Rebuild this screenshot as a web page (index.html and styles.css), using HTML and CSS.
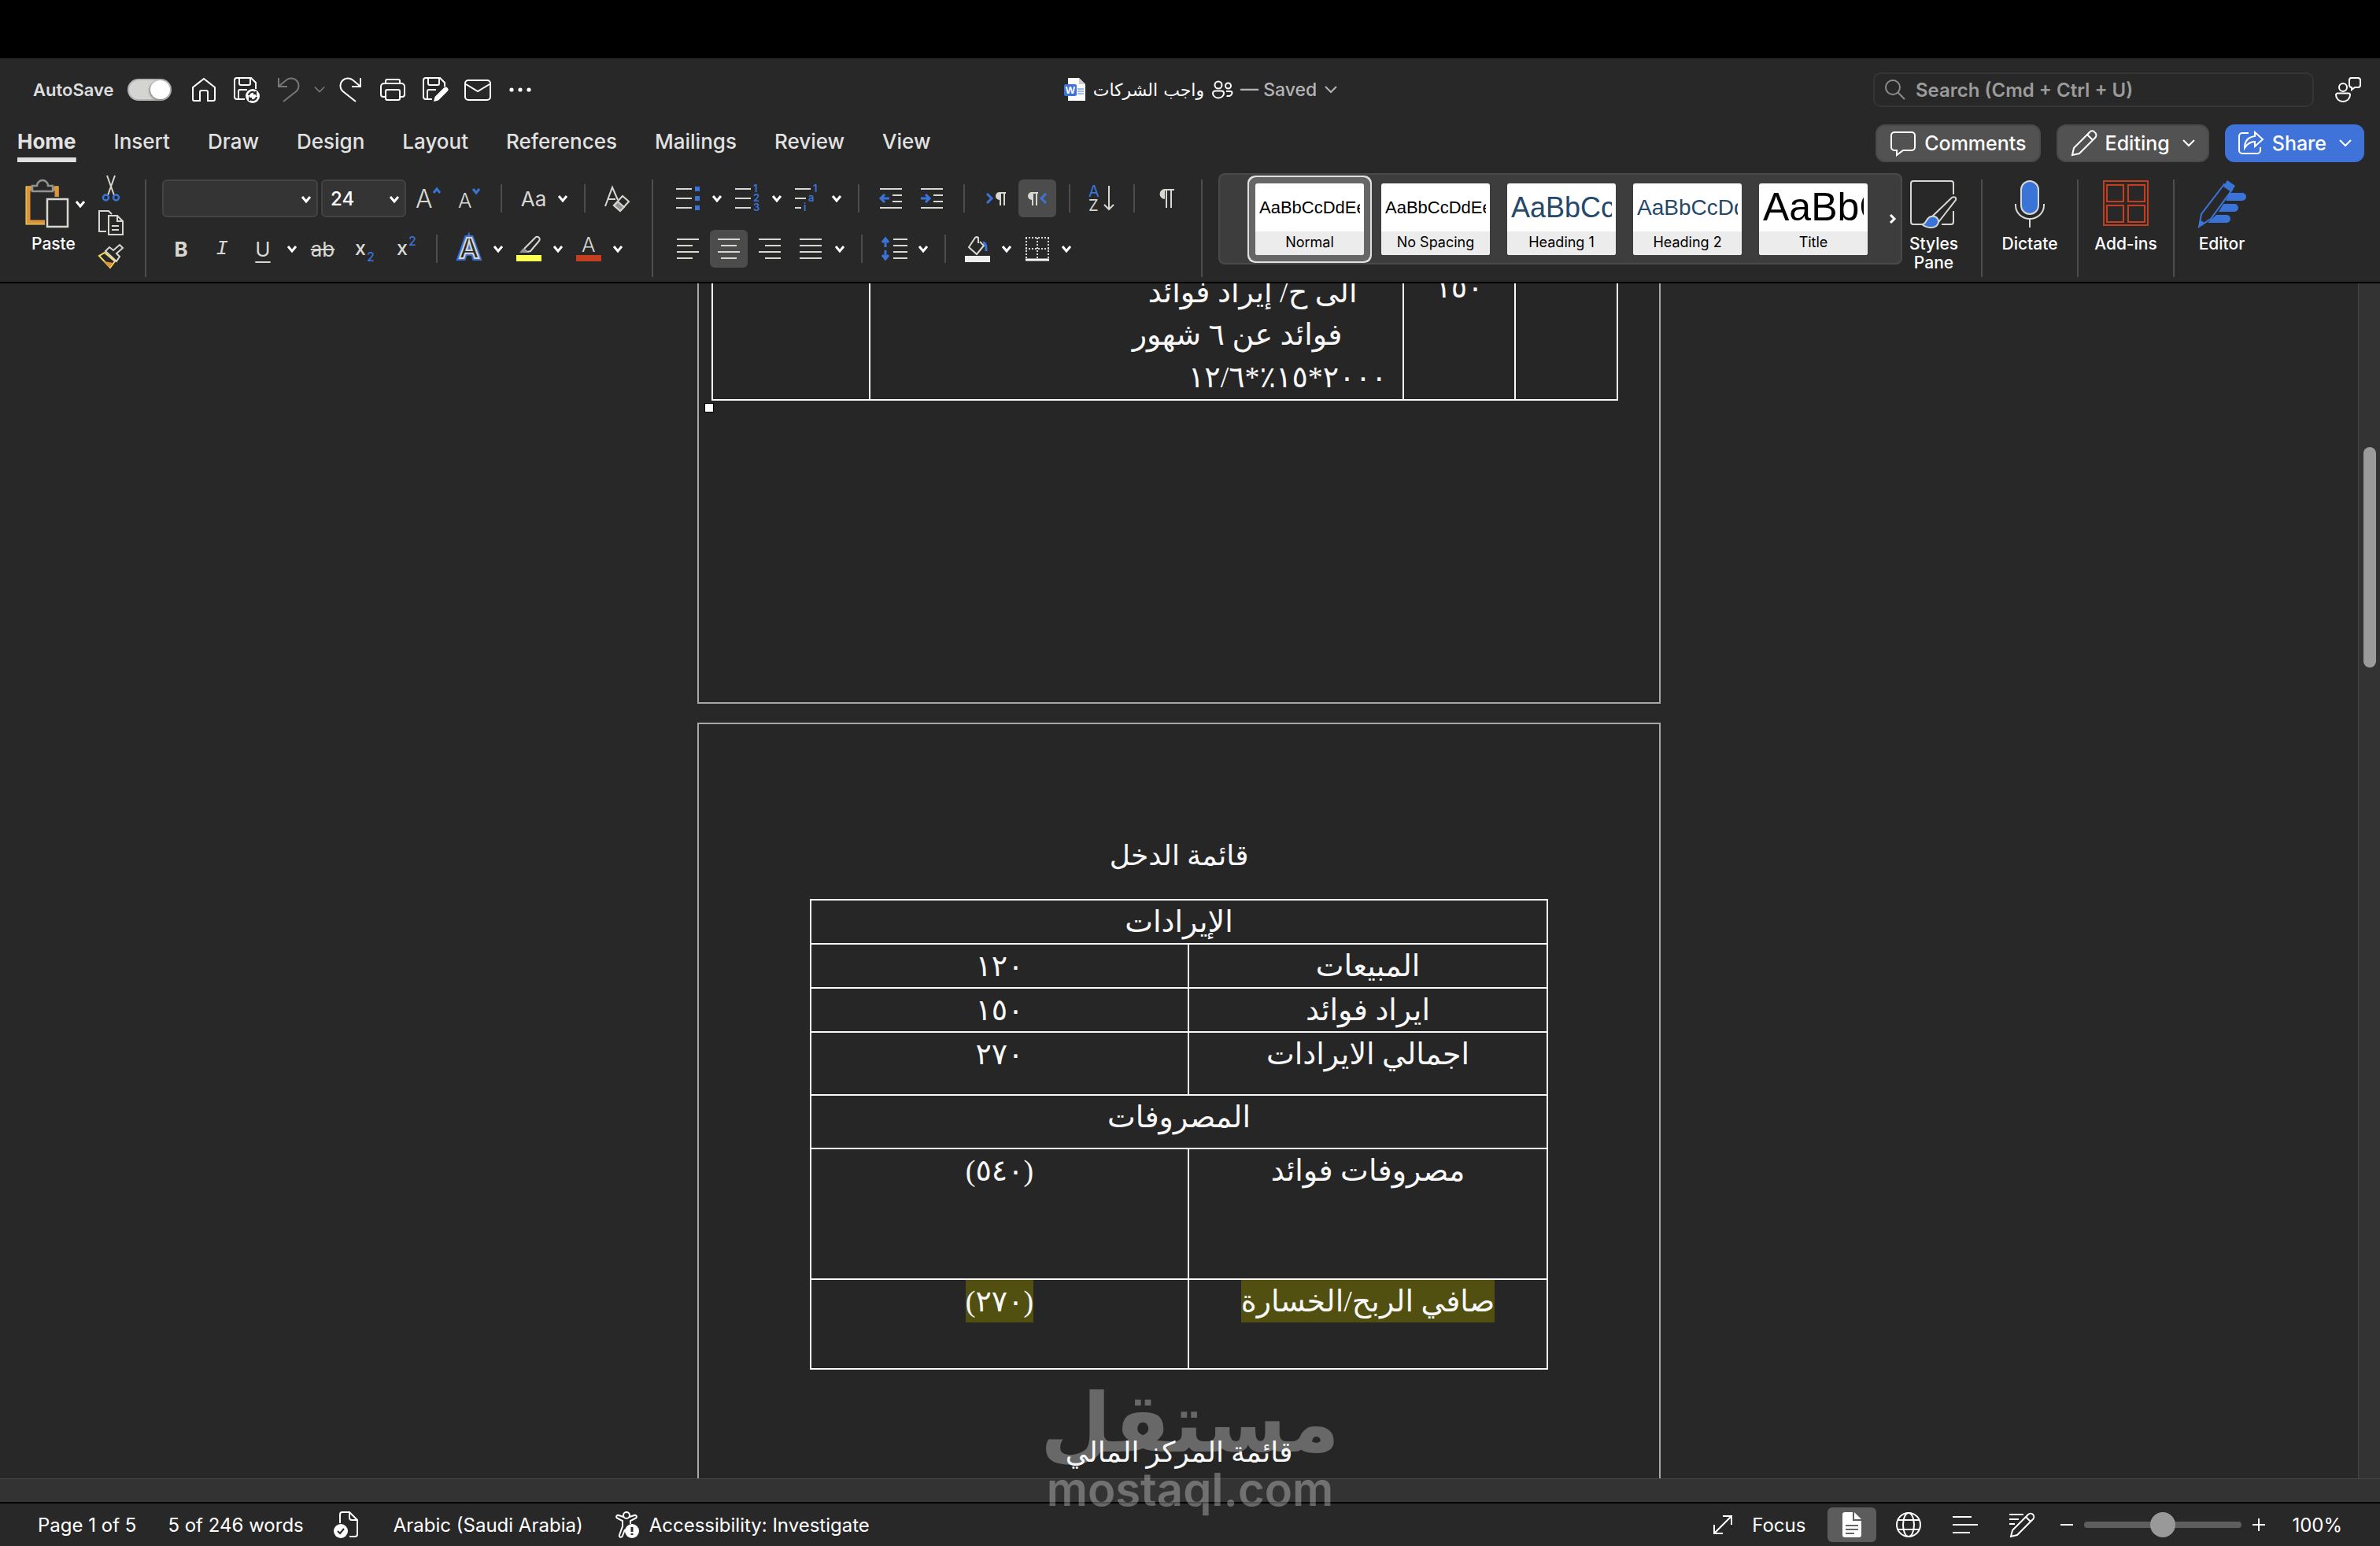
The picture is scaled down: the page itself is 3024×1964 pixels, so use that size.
FILE: index.html
```html
<!DOCTYPE html>
<html lang="en">
<head>
<meta charset="UTF-8" />
<meta name="viewport" content="width=device-width, initial-scale=1" />
<title>واجب الشركات</title>
<link rel="stylesheet" href="styles.css">
</head>
<body>
<!-- shared shapes -->
<svg class="defs" aria-hidden="true">
  <symbol id="chev" viewBox="0 0 14 10"><path d="M2 2l5 6 5-6" fill="none" stroke="currentColor" stroke-width="3"/></symbol>
  <symbol id="chev-thin" viewBox="0 0 16 10"><path d="M1 1l7 7 7-7" fill="none" stroke="currentColor" stroke-width="2"/></symbol>
</svg>

<div class="notch"></div>

<header class="titlebar">
  <div class="quick">
    <label class="autosave" for="autosave">AutoSave</label>
    <input type="checkbox" id="autosave" class="toggle" checked>
    <button class="quick-btn" aria-label="Home"><svg width="32" height="32" viewBox="0 0 32 32"><path d="M2 13L16 2l14 11v15a2 2 0 0 1-2 2h-7V19a2 2 0 0 0-2-2h-6a2 2 0 0 0-2 2v11H4a2 2 0 0 1-2-2z"/></svg></button>
    <button class="quick-btn" aria-label="Save"><svg width="34" height="34" viewBox="0 0 34 34"><path d="M15 29H5a3 3 0 0 1-3-3V5a3 3 0 0 1 3-3h18l6 6v8M8 2v7a2 2 0 0 0 2 2h10a2 2 0 0 0 2-2V2M7 29V19a2 2 0 0 1 2-2h9"/><circle cx="25" cy="25" r="9" fill="#fff" stroke="none"/><path d="M20 24a5 5 0 0 1 9-2v-3m0 3h-3M30 26a5 5 0 0 1-9 2v3m0-3h3" stroke="#282828"/></svg></button>
    <button class="quick-btn dim" aria-label="Undo"><svg width="30" height="32" viewBox="0 0 30 32"><path d="M2 1v11h11M3 11L12 3.500a9.500 9.500 0 0 1 13 1 9.500 9.500 0 0 1 0 13L8 31"/></svg></button>
    <button class="quick-chev dim" aria-label="Undo options"><svg width="14" height="10"><use href="#chev-thin"/></svg></button>
    <button class="quick-btn" aria-label="Redo"><svg width="30" height="32" viewBox="0 0 30 32"><path d="M28 1v11H17M27 11L18 3.500a9.500 9.500 0 0 0-13 1 9.500 9.500 0 0 0 0 13L22 31"/></svg></button>
    <button class="quick-btn" aria-label="Print"><svg width="34" height="30" viewBox="0 0 34 30"><path d="M8 7V4a2 2 0 0 1 2-2h14a2 2 0 0 1 2 2v3M7 24H5a3 3 0 0 1-3-3V11a4 4 0 0 1 4-4h22a4 4 0 0 1 4 4v10a3 3 0 0 1-3 3h-2"/><rect x="8" y="15" width="18" height="13" rx="2"/></svg></button>
    <button class="quick-btn" aria-label="Save as"><svg width="34" height="34" viewBox="0 0 34 34"><path d="M13 29H5a3 3 0 0 1-3-3V5a3 3 0 0 1 3-3h18l6 6v5M8 2v7a2 2 0 0 0 2 2h10a2 2 0 0 0 2-2V2M7 29V19a2 2 0 0 1 2-2h9"/><path d="M15 32l1.500-6L28 14.500a3 3 0 0 1 4.500 4.500L21 30.500z" fill="#fff" stroke="none"/></svg></button>
    <button class="quick-btn" aria-label="Mail"><svg width="34" height="28" viewBox="0 0 34 28"><rect x="1" y="2" width="32" height="25" rx="4"/><path d="M2 7l15 9 15-9"/></svg></button>
    <button class="quick-btn" aria-label="More"><svg width="28" height="6" viewBox="0 0 28 6"><g fill="#fff" stroke="none"><circle cx="3" cy="3" r="2.600"/><circle cx="14" cy="3" r="2.600"/><circle cx="25" cy="3" r="2.600"/></g></svg></button>
  </div>

  <button class="doc-title">
    <svg width="28" height="32" viewBox="0 0 28 32"><path d="M5 1h14l8 8v21H5z" fill="#fff"/><path d="M19 1v8h8z" fill="#ccc"/><path d="M17 15h8M17 18h8M17 21h8" stroke="#3b74d9"/><rect x="0" y="9" width="16" height="15" rx="2" fill="#3b74d9"/><text x="8" y="21" class="w-badge">W</text></svg>
    <bdi class="doc-name" lang="ar">واجب الشركات</bdi>
    <svg class="line" width="28" height="24" viewBox="0 0 28 24"><circle cx="9" cy="6" r="4.500"/><circle cx="21.500" cy="7" r="3.500"/><path d="M5 13.500h8a3 3 0 0 1 3 3c0 3-3 6-7 6s-7-3-7-6a3 3 0 0 1 3-3zM19 14h5a2 2 0 0 1 2.500 2c0 3-3 4.500-7 4"/></svg>
    <span class="saved">— Saved</span>
    <svg class="saved" width="18" height="10"><use href="#chev-thin"/></svg>
  </button>

  <div class="title-right">
    <label class="search" for="search">
      <svg width="28" height="28" viewBox="0 0 28 28"><circle cx="11" cy="11" r="9"/><path d="M17.500 17.500L26 26"/></svg>
      <input type="text" id="search" placeholder="Search (Cmd + Ctrl + U)" aria-label="Search">
    </label>
    <button class="quick-btn" aria-label="Presence"><svg width="34" height="34" viewBox="0 0 34 34"><circle cx="11" cy="14" r="5"/><path d="M4 21.500h14a2 2 0 0 1 2 2c0 5-4 8.500-9 8.500s-9-3.500-9-8.500a2 2 0 0 1 2-2zM21 2h9a3 3 0 0 1 3 3v6a3 3 0 0 1-3 3h-4l-4 3v-3a3 3 0 0 1-3-3V5a3 3 0 0 1 2-3z"/></svg></button>
  </div>
</header>

<nav class="tabs">
  <button class="tab active">Home</button>
  <button class="tab">Insert</button>
  <button class="tab">Draw</button>
  <button class="tab">Design</button>
  <button class="tab">Layout</button>
  <button class="tab">References</button>
  <button class="tab">Mailings</button>
  <button class="tab">Review</button>
  <button class="tab">View</button>
  <div class="tab-actions">
    <button class="pill"><svg width="34" height="32" viewBox="0 0 34 32"><path d="M6 2h22a4 4 0 0 1 4 4v15a4 4 0 0 1-4 4H17l-8 6v-6H6a4 4 0 0 1-4-4V6a4 4 0 0 1 4-4z"/></svg>Comments</button>
    <button class="pill"><svg width="34" height="34" viewBox="0 0 34 34"><path d="M2 32l2-9L24 3a4 4 0 0 1 6.500 0A4.500 4.500 0 0 1 31 10L11 30zM21 6l7 7"/></svg>Editing<svg width="16" height="10"><use href="#chev-thin"/></svg></button>
    <button class="pill share"><svg width="34" height="32" viewBox="0 0 34 32"><path d="M14 3H6a4 4 0 0 0-4 4v18a4 4 0 0 0 4 4h19a4 4 0 0 0 4-4v-4M22 2l10 9-10 9v-6c-6 0-10 3-13 8 0-9 5-14 13-15z"/></svg>Share<svg width="16" height="10"><use href="#chev-thin"/></svg></button>
  </div>
</nav>

<section class="ribbon">
  <div class="clipboard">
    <button class="big paste">
      <span class="paste-icon">
        <svg width="56" height="62" viewBox="0 0 56 62"><path d="M9 10H2v46h23M37 10h4v12" fill="none" stroke="#f5dc62" stroke-width="3"/><path d="M9 12H4v42h21M36 12h4v10" fill="none" stroke="#dd953b" stroke-width="5"/><path d="M9 15V8h6a7 7 0 0 1 14 0h6v7z" fill="#282828" stroke="#939393" stroke-width="2.500"/><rect x="28" y="25" width="26" height="35" fill="#282828" stroke="#d8d8d2" stroke-width="2.500"/></svg>
        <svg width="14" height="10"><use href="#chev"/></svg>
      </span>
      Paste
    </button>
    <div class="clip-tools">
      <button aria-label="Cut"><svg width="24" height="34" viewBox="0 0 24 34"><path d="M7 1l9 25M17 1L8 26" stroke="#d8d8d2" stroke-width="2"/><circle cx="5.500" cy="29" r="3.500" stroke="#3b74d9" stroke-width="2.500"/><circle cx="18.500" cy="29" r="3.500" stroke="#3b74d9" stroke-width="2.500"/></svg></button>
      <button aria-label="Copy"><svg width="34" height="34" viewBox="0 0 34 34"><path d="M11 28H2V2h12l4 4M14 8h11l7 7v17H14zM25 8v7h7M18 21h9M18 26h9" stroke="#d8d8d2" stroke-width="2"/></svg></button>
      <button aria-label="Format painter"><svg width="34" height="32" viewBox="0 0 34 32"><path d="M2 15l14 15 6-8L9 11z" fill="#282828" stroke="#f5dc62" stroke-width="2"/><path d="M8 22l12 2-5 6z" fill="#dd953b"/><path d="M10 9l14 13 4-6-4-4 8-7-4-4-8 7-5-4z" fill="#282828" stroke="#d8d8d2" stroke-width="2"/></svg></button>
    </div>
  </div>

  <span class="divider"></span>

  <div class="rows">
    <div class="row">
      <div class="combo font-name"><select aria-label="Font"><option></option></select><svg width="14" height="10"><use href="#chev"/></svg></div>
      <div class="combo font-size"><select aria-label="Font size"><option>24</option></select><svg width="14" height="10"><use href="#chev"/></svg></div>
      <button class="tool" aria-label="Grow font"><svg width="32" height="30" viewBox="0 0 32 30"><text x="0" y="27" class="t30">A</text><path d="M23 8l4-5 4 5" class="blue"/></svg></button>
      <button class="tool" aria-label="Shrink font"><svg width="28" height="30" viewBox="0 0 28 30"><text x="0" y="27" class="t26">A</text><path d="M19 3l4 5 4-5" class="blue"/></svg></button>
      <span class="sep"></span>
      <button class="tool letters">Aa</button><button class="drop" aria-label="Change case"><svg width="14" height="10"><use href="#chev"/></svg></button>
      <span class="sep"></span>
      <button class="tool" aria-label="Clear formatting"><svg width="34" height="34" viewBox="0 0 34 34"><path d="M2 27L11 3l7 16M6 18h9" /><path d="M13 26l11-12 8 7-11 12z" fill="#282828"/><path d="M13 26l5-5 8 7-5 5z" fill="#939393"/></svg></button>
    </div>
    <div class="row">
      <button class="tool letters bold">B</button>
      <button class="tool letters italic">I</button>
      <button class="tool letters underline">U</button><button class="drop" aria-label="Underline style"><svg width="14" height="10"><use href="#chev"/></svg></button>
      <button class="tool letters strike">ab</button>
      <button class="tool" aria-label="Subscript"><svg width="22" height="34" viewBox="0 0 22 34"><text x="0" y="25" class="t24b">x</text><text x="15" y="33" class="t16 fill-blue">2</text></svg></button>
      <button class="tool" aria-label="Superscript"><svg width="20" height="34" viewBox="0 0 20 34"><text x="0" y="25" class="t24b">x</text><text x="15" y="13" class="t16 fill-blue">2</text></svg></button>
      <span class="sep"></span>
      <button class="tool" aria-label="Text effects"><svg width="34" height="34" viewBox="0 0 34 34"><text x="4" y="29" class="fx-outer">A</text><text x="4" y="29" class="fx-inner" aria-hidden="true">A</text></svg></button><button class="drop" aria-label="Text effects options"><svg width="14" height="10"><use href="#chev"/></svg></button>
      <button class="tool" aria-label="Highlight"><svg width="32" height="34" viewBox="0 0 32 34"><path d="M11 16L24 3a3 3 0 0 1 5 4L18 20l-4 1-4-3z"/><path d="M9 16l6 6H4z" fill="#939393" stroke="none"/><path d="M0 25h32v8H0z" fill="#ffff54" stroke="none"/></svg></button><button class="drop" aria-label="Highlight colour"><svg width="14" height="10"><use href="#chev"/></svg></button>
      <button class="tool" aria-label="Font colour"><svg width="32" height="34" viewBox="0 0 32 34"><text x="7" y="21" class="t26">A</text><path d="M0 25h32v8H0z" fill="#c43e20" stroke="none"/></svg></button><button class="drop" aria-label="Font colour options"><svg width="14" height="10"><use href="#chev"/></svg></button>
    </div>
  </div>

  <span class="divider"></span>

  <div class="rows">
    <div class="row">
      <button class="tool" aria-label="Bullets"><svg width="30" height="34" viewBox="0 0 30 34"><path d="M0 5h20M0 17h20M0 29h20"/><path d="M24 2h6v6h-6zM24 14h6v6h-6zM24 26h6v6h-6z" fill="#3b74d9" stroke="none"/></svg></button><button class="drop" aria-label="Bullet styles"><svg width="14" height="10"><use href="#chev"/></svg></button>
      <button class="tool" aria-label="Numbering"><svg width="32" height="34" viewBox="0 0 32 34"><path d="M0 5h20M0 17h20M0 29h20"/><g class="t12 fill-blue"><text x="23" y="9">1</text><text x="23" y="21">2</text><text x="23" y="33">3</text></g></svg></button><button class="drop" aria-label="Number styles"><svg width="14" height="10"><use href="#chev"/></svg></button>
      <button class="tool" aria-label="Multilevel list"><svg width="32" height="34" viewBox="0 0 32 34"><path d="M0 5h20M0 17h14M0 29h8"/><g class="t12 fill-blue"><text x="23" y="9">1</text><text x="17" y="21">a</text><text x="11" y="33">i</text></g></svg></button><button class="drop" aria-label="Multilevel styles"><svg width="14" height="10"><use href="#chev"/></svg></button>
      <span class="sep"></span>
      <button class="tool" aria-label="Decrease indent"><svg width="30" height="34" viewBox="0 0 30 34"><path d="M1 5h28M17 13h12M17 21h12M1 29h28"/><path d="M13 17H2M7 12l-5 5 5 5" class="blue"/></svg></button>
      <button class="tool" aria-label="Increase indent"><svg width="30" height="34" viewBox="0 0 30 34"><path d="M1 5h28M17 13h12M17 21h12M1 29h28"/><path d="M1 17h11M7 12l5 5-5 5" class="blue"/></svg></button>
      <span class="sep"></span>
      <button class="tool" aria-label="Left to right"><svg width="26" height="24" viewBox="0 0 26 24"><path d="M1 6l6 6-6 6" class="blue"/><path d="M17 5h8M18 5v16M23 5v16"/><path d="M17 4a5 5 0 0 0 0 10z" fill="#d8d8d2" stroke="none"/></svg></button>
      <button class="tool on" aria-label="Right to left"><svg width="26" height="24" viewBox="0 0 26 24"><path d="M24 6l-6 6 6 6" class="blue"/><path d="M6 5h8M7 5v16M12 5v16"/><path d="M6 4a5 5 0 0 0 0 10z" fill="#d8d8d2" stroke="none"/></svg></button>
      <span class="sep"></span>
      <button class="tool" aria-label="Sort"><svg width="34" height="34" viewBox="0 0 34 34"><g class="t20"><text x="0" y="15" class="fill-blue">A</text><text x="0" y="33">Z</text></g><path d="M26 1v30M20 25l6 6 6-6"/></svg></button>
      <span class="sep"></span>
      <button class="tool" aria-label="Show marks"><svg width="22" height="28" viewBox="0 0 22 28"><path d="M8 3h13M11 3v23M17 3v23"/><path d="M9 2a6.500 6.500 0 0 0 0 13z" fill="#d8d8d2" stroke="none"/></svg></button>
    </div>
    <div class="row">
      <button class="tool" aria-label="Align left"><svg width="28" height="28" viewBox="0 0 28 28"><path d="M0 2h28M0 10h20M0 18h28M0 26h20"/></svg></button>
      <button class="tool on" aria-label="Center"><svg width="28" height="28" viewBox="0 0 28 28"><path d="M0 2h28M4 10h20M0 18h28M4 26h20"/></svg></button>
      <button class="tool" aria-label="Align right"><svg width="28" height="28" viewBox="0 0 28 28"><path d="M0 2h28M8 10h20M0 18h28M8 26h20"/></svg></button>
      <button class="tool" aria-label="Justify"><svg width="28" height="28" viewBox="0 0 28 28"><path d="M0 2h28M0 10h28M0 18h28M0 26h28"/></svg></button><button class="drop" aria-label="Justify options"><svg width="14" height="10"><use href="#chev"/></svg></button>
      <span class="sep"></span>
      <button class="tool" aria-label="Line spacing"><svg width="34" height="30" viewBox="0 0 34 30"><path d="M16 3h18M16 11h18M16 19h18M16 27h18"/><path d="M6 13V3M2 7l4-5 4 5M6 17v10M2 23l4 5 4-5" class="blue"/></svg></button><button class="drop" aria-label="Line spacing options"><svg width="14" height="10"><use href="#chev"/></svg></button>
      <span class="sep"></span>
      <button class="tool" aria-label="Shading"><svg width="32" height="34" viewBox="0 0 32 34"><path d="M17 10V3a3 3 0 0 0-4 0L5 15l10 9 9-11-5-5"/><path d="M23 9c4 1 4 5 4 11" class="blue"/><path d="M0 26h32v8H0z" fill="#eee" stroke="none"/></svg></button><button class="drop" aria-label="Shading options"><svg width="14" height="10"><use href="#chev"/></svg></button>
      <button class="tool" aria-label="Borders"><svg width="32" height="32" viewBox="0 0 32 32"><path d="M1 2h30M1 16h30M2 2v26M16 2v26M30 2v26" stroke-dasharray="2 2"/><path d="M1 30h30" stroke="#fff" stroke-width="3"/></svg></button><button class="drop" aria-label="Border options"><svg width="14" height="10"><use href="#chev"/></svg></button>
    </div>
  </div>

  <span class="divider"></span>

  <div class="gallery">
    <button class="style-card selected"><span class="sample normal">AaBbCcDdEe</span><span class="name">Normal</span></button>
    <button class="style-card"><span class="sample normal">AaBbCcDdEe</span><span class="name">No Spacing</span></button>
    <button class="style-card"><span class="sample h1">AaBbCc</span><span class="name">Heading 1</span></button>
    <button class="style-card"><span class="sample h2">AaBbCcDd</span><span class="name">Heading 2</span></button>
    <button class="style-card"><span class="sample title">AaBbC</span><span class="name">Title</span></button>
    <button class="gallery-next" aria-label="More styles"><svg width="10" height="14" viewBox="0 0 10 14"><path d="M2 2l5 5-5 5"/></svg></button>
  </div>

  <button class="big"><svg width="62" height="62" viewBox="0 0 62 62"><path d="M20 57H5a3 3 0 0 1-3-3V5a3 3 0 0 1 3-3h48a3 3 0 0 1 3 3v14M56 40v14a3 3 0 0 1-3 3H41" stroke="#d8d8d2" stroke-width="2"/><path d="M29 47L54 23c3-2 6 0 5 3L38 53z" fill="#282828" stroke="#d8d8d2" stroke-width="2"/><path d="M16 57c6 0 5-9 12-10s11 5 8 10-12 6-20 0z" fill="#3b74d9" stroke="#d8d8d2" stroke-width="2"/></svg>Styles<br>Pane</button>
  <span class="divider"></span>
  <button class="big"><svg width="40" height="62" viewBox="0 0 40 62"><rect x="9" y="2" width="22" height="42" rx="11" fill="#3b74d9" stroke="#d8d8d2" stroke-width="2"/><path d="M2 31v2a18 17 0 0 0 36 0v-2M20 50v11" stroke="#d8d8d2" stroke-width="2"/></svg>Dictate</button>
  <span class="divider"></span>
  <button class="big"><svg width="60" height="62" viewBox="0 0 60 62"><path d="M2 2h56v56H2zM6 7h21v21H6zM33 7h21v21H33zM6 33h21v21H6zM33 33h21v21H33z" stroke="#c43e20" stroke-width="2"/></svg>Add-ins</button>
  <span class="divider"></span>
  <button class="big"><svg width="62" height="62" viewBox="0 0 62 62"><path d="M41 17h16a5 5 0 0 1 0 10H36zM33 31h14a5 5 0 0 1 0 10H27zM24 45h13a5 5 0 0 1 0 10H13z" fill="#3b74d9"/><path d="M2 60l3-16L34 6l10 7-27 37z" fill="#282828" stroke="#3b74d9" stroke-width="2"/><path d="M38 1l10 7-5 8-10-7zM2 60l1-9 6 4z" fill="#3b74d9"/></svg>Editor</button>
</section>

<main class="workspace">
  <div class="canvas">
    <article class="page first" dir="rtl" lang="ar">
      <table class="journal">
        <tr>
          <td class="c-date"></td>
          <td class="c-amount">١٥٠</td>
          <td class="c-text">
            <p>&nbsp;&nbsp;&nbsp;&nbsp;&nbsp;الى ح/ إيراد فوائد</p>
            <p>&nbsp;&nbsp;&nbsp;&nbsp;&nbsp;&nbsp;&nbsp;فوائد عن ٦ شهور</p>
            <p>&nbsp;<bdo dir="ltr">١٢/٦*٪١٥*٢٠٠٠</bdo></p>
          </td>
          <td></td>
        </tr>
      </table>
      <span class="handle"></span>
    </article>

    <article class="page second" dir="rtl" lang="ar">
      <p class="caption">قائمة الدخل</p>
      <table class="income">
        <colgroup><col class="c-label"><col></colgroup>
        <tr><td colspan="2">الإيرادات</td></tr>
        <tr><td>المبيعات</td><td>١٢٠</td></tr>
        <tr><td>ايراد فوائد</td><td>١٥٠</td></tr>
        <tr class="total"><td>اجمالي الايرادات</td><td>٢٧٠</td></tr>
        <tr class="head"><td colspan="2">المصروفات</td></tr>
        <tr class="expense"><td>مصروفات فوائد</td><td>(٥٤٠)</td></tr>
        <tr class="net"><td><mark>صافي الربح/الخسارة</mark></td><td><mark>(٢٧٠)</mark></td></tr>
      </table>
      <p class="caption">قائمة المركز المالي</p>
    </article>
  </div>
  <div class="vscroll"><span class="thumb"></span></div>
</main>
<div class="hscroll"></div>

<footer class="status">
  <button>Page 1 of 5</button>
  <button class="words">5 of 246 words</button>
  <button class="proof" aria-label="Proofing"><svg width="32" height="36" viewBox="0 0 32 36"><path d="M8 16V5a3 3 0 0 1 3-3h9l10 10v18a3 3 0 0 1-3 3h-7M20 2v7a3 3 0 0 0 3 3h7"/><circle cx="9" cy="26" r="9" fill="#fff" stroke="none"/><path d="M5 26l3 3 5-6" stroke="#282828"/></svg></button>
  <button class="lang">Arabic (Saudi Arabia)</button>
  <button class="access"><svg width="32" height="36" viewBox="0 0 32 36"><circle cx="15" cy="6" r="4"/><path d="M11 8L5 6c-3-1-4 3-1 4l6 3v7L6 31c-1 3 3 4 4 1l3-8M19 8l6-2c3-1 4 3 1 4l-6 3v4"/><circle cx="22" cy="26" r="9" fill="#fff" stroke="none"/><path d="M22 21v6M22 29v2" stroke="#282828" stroke-width="3"/></svg>Accessibility: Investigate</button>

  <div class="view">
    <button class="focus"><svg width="26" height="26" viewBox="0 0 26 26"><path d="M2 24L24 2M13 2h11v11M2 13v11h11"/></svg>Focus</button>
    <div class="modes">
      <button class="mode on" aria-label="Print layout"><svg width="24" height="32" viewBox="0 0 24 32"><path d="M3 0h10v11h11v18a3 3 0 0 1-3 3H3a3 3 0 0 1-3-3V3a3 3 0 0 1 3-3zM15 0l9 9h-9z" fill="#fff" stroke="none"/><path d="M4 17h16M4 22h16M4 27h11" stroke="#666"/></svg></button>
      <button class="mode" aria-label="Web layout"><svg width="34" height="34" viewBox="0 0 34 34"><circle cx="17" cy="17" r="15"/><ellipse cx="17" cy="17" rx="7" ry="15"/><path d="M3 11h28M3 23h28"/></svg></button>
      <button class="mode" aria-label="Outline"><svg width="32" height="24" viewBox="0 0 32 24"><path d="M0 2h24M0 12h32M0 22h22"/></svg></button>
      <button class="mode" aria-label="Draft"><svg width="34" height="34" viewBox="0 0 34 34"><path d="M1 4h18M1 10h12M1 16h7M3 32l2-8L25 4a4 4 0 0 1 6 6L11 30zM22 7l6 6"/></svg></button>
    </div>
    <button class="zoom-btn" aria-label="Zoom out"><svg width="16" height="16" viewBox="0 0 16 16"><path d="M0 8h16"/></svg></button>
    <input type="range" class="zoom" min="0" max="100" value="50" aria-label="Zoom">
    <button class="zoom-btn" aria-label="Zoom in"><svg width="16" height="16" viewBox="0 0 16 16"><path d="M0 8h16M8 0v16"/></svg></button>
    <button class="percent">100%</button>
  </div>
</footer>

<div class="watermark"><span class="wm-ar" lang="ar">مستقل</span><span class="wm-en">mostaql.com</span></div>
</body>
</html>
```
FILE: styles.css
```css
* {
  box-sizing: border-box;
}
body {
  margin: 0;
  height: 100vh;
  display: flex;
  flex-direction: column;
  overflow: hidden;
  background: #282828;
  color: #fff;
  font-family: Inter, "DejaVu Sans", sans-serif;
  font-size: 24px;
}
button, input, select {
  font: inherit;
  color: inherit;
  background: none;
  border: none;
  padding: 0;
  margin: 0;
}
button {
  display: flex;
  align-items: center;
  justify-content: center;
  white-space: nowrap;
}
svg {
  flex: none;
  display: block;
  fill: none;
  overflow: visible;
}
p {
  margin: 0;
}
.defs {
  position: absolute;
  width: 0;
  height: 0;
}
.notch {
  flex: none;
  height: 74px;
  background: #000;
}

/* title bar */
.titlebar {
  flex: none;
  height: 80px;
  display: grid;
  grid-template-columns: 1fr auto 1fr;
  align-items: center;
  padding: 0 14px 0 42px;
}
.quick {
  display: flex;
  align-items: center;
}
.autosave {
  font-size: 22px;
  font-weight: 600;
  color: #ddd;
  width: 120px;
}
.toggle {
  appearance: none;
  width: 56px;
  height: 28px;
  margin-right: 14px;
  border-radius: 14px;
  background: #d4d4d2;
  border: 2px solid #b4b4b6;
  display: flex;
  justify-content: flex-end;
}
.toggle::before {
  content: "";
  width: 25px;
  height: 24px;
  border-radius: 50%;
  background: #fff;
  box-shadow: -1px 1px 3px #777;
}
.quick-btn {
  width: 54px;
  height: 48px;
}
.quick-btn svg, .line {
  stroke: #fff;
  stroke-width: 2px;
}
.quick-chev {
  width: 24px;
}
.quick .dim, .quick .dim svg {
  color: #777;
  stroke: #777;
}
.doc-title {
  gap: 9px;
}
.w-badge {
  font: bold 13px "Liberation Sans", sans-serif;
  fill: #fff;
  text-anchor: middle;
}
.doc-name {
  font-family: "DejaVu Sans", sans-serif;
  font-size: 22px;
}
.saved {
  color: #b5b5b7;
  font-size: 23px;
  font-weight: 500;
}
.title-right {
  display: flex;
  align-items: center;
  justify-content: flex-end;
  gap: 16px;
}
.search {
  width: 560px;
  height: 44px;
  padding: 0 12px;
  border: 2px solid #353535;
  border-radius: 10px;
  display: flex;
  align-items: center;
  gap: 12px;
}
.search svg {
  stroke: #8c8c8c;
  stroke-width: 2px;
}
.search input {
  flex: 1;
  font-weight: 600;
  outline: none;
}
.search input::placeholder {
  color: #9b9b9b;
}

/* tabs */
.tabs {
  flex: none;
  height: 56px;
  display: flex;
  align-items: flex-end;
  gap: 48px;
  padding: 0 20px 4px 22px;
}
.tab {
  height: 44px;
  padding-bottom: 4px;
  font-size: 26px;
  font-weight: 500;
  color: #e2e2e2;
  border-bottom: 6px solid transparent;
}
.tab.active {
  font-weight: 700;
  background: linear-gradient(#e0e0e0, #e0e0e0) bottom / 100% 6px no-repeat border-box;
}
.tab-actions {
  margin-left: auto;
  display: flex;
  gap: 20px;
}
.pill {
  height: 48px;
  padding: 0 16px;
  gap: 10px;
  border: 2px solid #4a4a4a;
  border-radius: 12px;
  background: #525252;
  font-size: 25px;
  font-weight: 500;
}
.pill svg {
  stroke: #fff;
  stroke-width: 2px;
}
.pill svg + svg {
  margin-left: 6px;
}
.pill.share {
  background: #3f73d9;
  border-color: #3f73d9;
  padding: 0 14px;
}

/* ribbon */
.ribbon {
  flex: none;
  height: 150px;
  display: flex;
  align-items: flex-start;
  padding: 18px 0 0 32px;
  border-bottom: 2px solid #000;
}
.clipboard {
  display: flex;
  align-items: flex-start;
  gap: 6px;
  width: 132px;
}
.clip-tools {
  display: flex;
  flex-direction: column;
  gap: 10px;
  width: 38px;
  margin-top: -6px;
}
.big {
  flex-direction: column;
  width: 80px;
  font-size: 21px;
  font-weight: 500;
  line-height: 24px;
}
.big > svg, .paste-icon {
  margin-bottom: 8px;
}
.paste {
  width: 84px;
  align-items: flex-start;
  text-indent: 8px;
}
.paste-icon {
  display: flex;
  align-items: center;
  gap: 7px;
}
.divider {
  width: 2px;
  height: 124px;
  margin: 0 20px;
  background: #4d4d4d;
}
.rows {
  display: flex;
  flex-direction: column;
  gap: 16px;
}
.row {
  display: flex;
  align-items: center;
  gap: 4px;
  height: 48px;
}
.sep {
  width: 2px;
  height: 36px;
  margin: 0 12px;
  background: #4d4d4d;
}
.tool {
  width: 48px;
  height: 48px;
  border-radius: 6px;
}
.tool.on {
  background: #4c4c4c;
}
.tool svg {
  stroke: #d8d8d2;
  stroke-width: 2px;
}
.tool svg .blue {
  stroke: #3b74d9;
  stroke-width: 3px;
}
.tool text {
  fill: #d8d8d2;
  stroke: none;
}
.tool .fill-blue, .tool .fill-blue text {
  fill: #3b74d9;
}
.drop {
  width: 22px;
  height: 48px;
  margin-left: -2px;
}
.letters {
  font-size: 26px;
  color: #d8d8d2;
}
.bold {
  font-weight: 700;
}
.italic {
  font-family: "Liberation Mono", monospace;
  font-style: italic;
}
.underline {
  text-decoration: underline;
  text-underline-offset: 6px;
}
.strike {
  text-decoration: line-through;
}
.t30 { font-size: 32px; font-weight: 300; }
.t26 { font-size: 26px; font-weight: 300; }
.t24b { font-size: 25px; font-weight: 500; }
.t20 { font-size: 20px; }
.t16 { font-size: 16px; font-weight: 500; }
.t12 { font-size: 13px; font-weight: 600; }
.tool .fx-outer, .tool .fx-inner {
  font-size: 36px;
  font-weight: 600;
  stroke: #3b74d9;
  stroke-width: 6px;
}
.tool .fx-inner {
  fill: #282828;
  stroke: #d8d8d2;
  stroke-width: 2px;
}
.combo {
  position: relative;
  height: 48px;
}
.combo select {
  appearance: none;
  width: 100%;
  height: 100%;
  padding: 0 10px;
  border: 2px solid #434343;
  border-radius: 6px;
  background: #343434;
  font-size: 24px;
  font-weight: 500;
}
.combo svg {
  position: absolute;
  right: 8px;
  top: 20px;
  pointer-events: none;
}
.font-name {
  width: 198px;
}
.font-size {
  width: 108px;
}

/* style gallery */
.gallery {
  display: flex;
  gap: 22px;
  height: 116px;
  margin-top: -8px;
  padding: 11px 0 11px 45px;
  border: 2px solid #4a4a4a;
  border-radius: 8px;
  background: #3d3d3d;
}
.style-card {
  flex-direction: column;
  align-items: stretch;
  width: 138px;
  height: 91px;
  border-radius: 3px;
  overflow: hidden;
  background: #fff;
  color: #000;
}
.style-card.selected {
  box-shadow: 0 0 0 8px #666, 0 0 0 10px #e0e0e0;
}
.sample {
  height: 61px;
  line-height: 61px;
  margin: 0 5px;
  overflow: hidden;
  text-align: left;
  font-family: "Liberation Sans", sans-serif;
}
.normal { font-size: 22px; }
.h1 { font-size: 36px; color: #26496a; }
.h2 { font-size: 28px; color: #26496a; }
.title { font-size: 50px; }
.name {
  height: 30px;
  line-height: 28px;
  background: #ececec;
  font-size: 18px;
}
.gallery-next {
  width: 20px;
}
.gallery-next svg {
  stroke: #fff;
  stroke-width: 3px;
}

/* document */
.workspace {
  flex: 1;
  min-height: 0;
  display: flex;
}
.canvas {
  flex: 1;
  overflow: hidden;
  display: flex;
  flex-direction: column;
  align-items: center;
  gap: 24px;
}
.page {
  flex: none;
  position: relative;
  width: 1224px;
  border: 2px solid #a8a8a8;
  background: #262626;
  font-family: "Liberation Serif", "DejaVu Sans", serif;
  font-size: 38px;
  line-height: 54px;
  color: #f8f8f8;
}
.page table {
  border-collapse: collapse;
  table-layout: fixed;
}
.page td {
  border: 2px solid #f8f8f8;
  padding: 0 10px;
  vertical-align: top;
}
.first {
  height: 552px;
  margin-top: -18px;
  border-top: none;
}
.journal {
  width: 1152px;
  margin-right: 52px;
}
.journal td {
  height: 165px;
}
.journal .c-date { width: 130px; }
.journal .c-amount { width: 142px; text-align: center; line-height: 42px; }
.journal .c-text { width: 678px; }
.handle {
  position: absolute;
  left: 7px;
  top: 170px;
  width: 12px;
  height: 12px;
  background: #fff;
  border: 1px solid #000;
}
.second {
  height: 1584px;
  padding-top: 140px;
  text-align: center;
}
.caption {
  margin-bottom: 28px;
  font-size: 36px;
}
.income {
  width: 938px;
  margin: 0 auto 78px;
}
.income tr {
  height: 56px;
}
.income .c-label { width: 456px; }
.income .total { height: 80px; }
.income .head { height: 68px; }
.income .expense { height: 166px; }
.income .net { height: 114px; }
mark {
  display: inline-block;
  background: #525010;
  color: inherit;
}
.vscroll {
  flex: none;
  width: 28px;
  padding: 208px 5px 0 6px;
  background: #333;
  border-left: 1px solid #444;
}
.thumb {
  display: block;
  height: 280px;
  border-radius: 8px;
  background: #9b9b9b;
}
.hscroll {
  flex: none;
  height: 32px;
  background: #333;
  border-top: 1px solid #444;
  border-bottom: 2px solid #000;
}

/* status bar */
.status {
  flex: none;
  height: 54px;
  display: flex;
  align-items: center;
  padding: 0 48px;
}
.status svg {
  stroke: #fff;
  stroke-width: 2px;
}
.words, .access { margin-left: 40px; }
.proof { margin-left: 38px; }
.lang { margin-left: 44px; }
.access { gap: 12px; }
.view {
  margin-left: auto;
  display: flex;
  align-items: center;
}
.focus {
  gap: 24px;
  margin-right: 28px;
}
.modes {
  display: flex;
  gap: 10px;
  margin-right: 4px;
}
.mode {
  width: 62px;
  height: 44px;
  border-radius: 6px;
}
.mode.on {
  background: #5c5c5c;
}
.zoom-btn {
  width: 44px;
  height: 44px;
}
.zoom {
  appearance: none;
  width: 200px;
  height: 8px;
  border-radius: 4px;
  background: #5e5e5e;
}
.zoom::-webkit-slider-thumb {
  appearance: none;
  width: 32px;
  height: 32px;
  border-radius: 50%;
  background: #999;
}
.percent {
  margin-left: 20px;
}

/* site mark over the sheet */
.watermark {
  position: absolute;
  left: 0;
  right: 0;
  bottom: 42px;
  display: flex;
  flex-direction: column;
  align-items: center;
  opacity: 0.3;
  pointer-events: none;
}
.wm-ar {
  font: bold 104px/108px "DejaVu Sans", sans-serif;
}
.wm-en {
  font-size: 58px;
  font-weight: 600;
  line-height: 60px;
}
```
